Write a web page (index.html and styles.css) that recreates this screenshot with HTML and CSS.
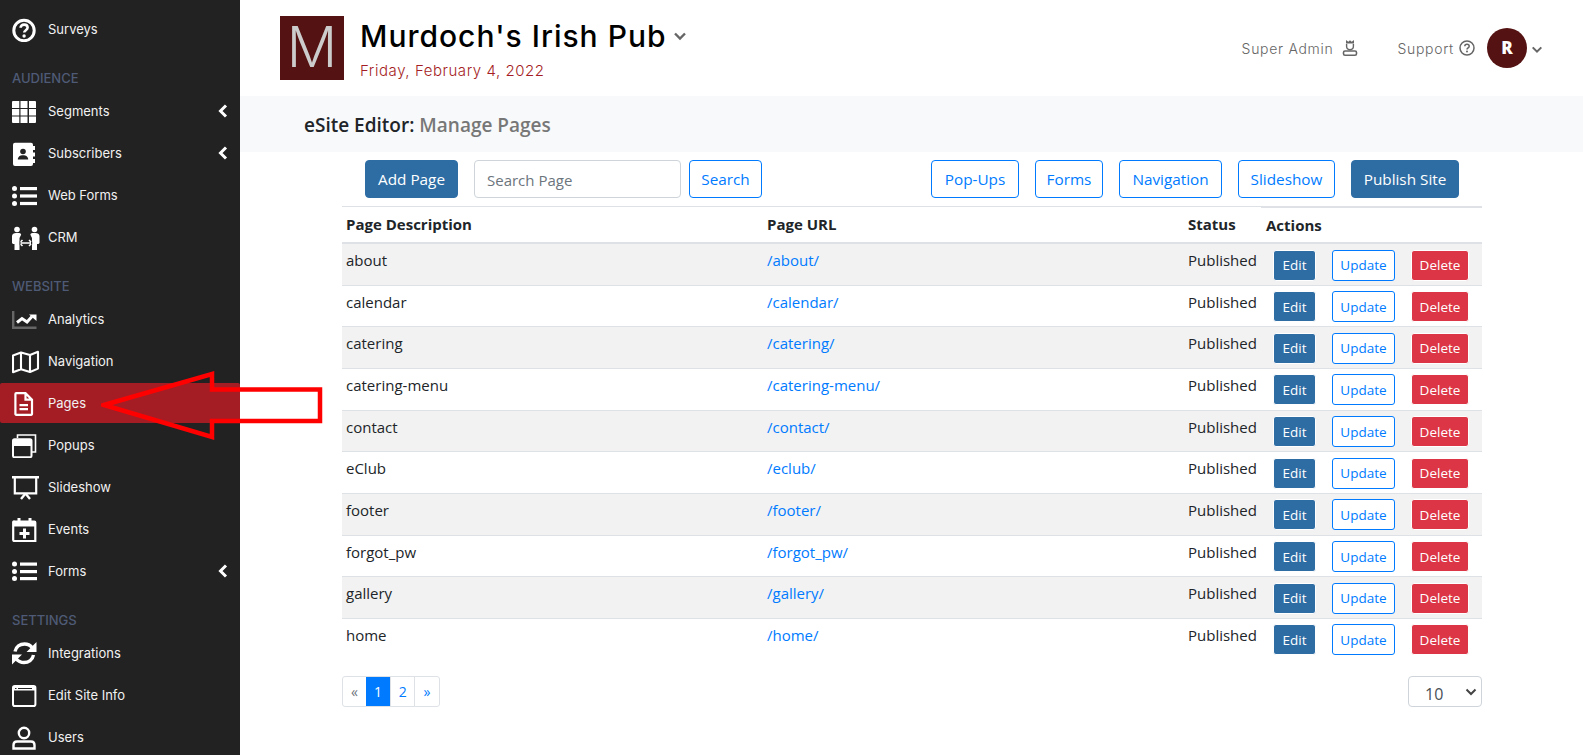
FILE: index.html
```html
<!DOCTYPE html>
<html lang="en">
<head>
<meta charset="utf-8">
<title>Manage Pages</title>
<link rel="stylesheet" href="styles.css">
</head>
<body>
<div class="app">
  <aside class="sidebar">
    <a class="nav-item first"><svg class="nav-icon" viewBox="0 0 28 26"><circle cx="12" cy="14.5" r="10.2" fill="none" stroke="#fff" stroke-width="3"/><path d="M8.600 11.800c0-2 1.500-3.200 3.500-3.200s3.500 1.200 3.500 3c0 2.600-3.400 2.600-3.400 5" fill="none" stroke="#fff" stroke-width="2.600"/><circle cx="12.100" cy="20" r="1.700" fill="#fff"/></svg><span>Surveys</span></a>
    <div class="nav-label">AUDIENCE</div>
    <a class="nav-item"><svg class="nav-icon" viewBox="0 0 28 26"><path fill="#fff" d="M1 3h6.300v7H0V4a1 1 0 0 1 1-1zM8.500 3h7v7h-7zM17 3h6a1 1 0 0 1 1 1v6h-7zM0 10.900h7.300v6.600H0zM8.500 10.900h7v6.600h-7zM17 10.900h7v6.600h-7zM0 18.400h7.300V25H1a1 1 0 0 1-1-1zM8.500 18.400h7V25h-7zM17 18.400h7V24a1 1 0 0 1-1 1h-6z"/></svg><span>Segments</span><svg class="nav-chevron" viewBox="0 0 10 14"><path d="M8 1.500 2.500 7 8 12.500" fill="none" stroke="#fff" stroke-width="3"/></svg></a>
    <a class="nav-item"><svg class="nav-icon" viewBox="0 0 28 26"><path fill="#fff" d="M3 2.700h16a2 2 0 0 1 2 2v19.300a2 2 0 0 1-2 2H3a2 2 0 0 1-2-2V4.700a2 2 0 0 1 2-2z"/><path fill="#fff" d="M21 6h2v4h-2zM21 12.500h2v4h-2zM21 19h2v4h-2z"/><circle cx="11" cy="11.500" r="2.800" fill="#222"/><path fill="#222" d="M5.800 19.500c0-2.800 2.300-4.300 5.200-4.300s5.200 1.500 5.200 4.300z"/></svg><span>Subscribers</span><svg class="nav-chevron" viewBox="0 0 10 14"><path d="M8 1.500 2.500 7 8 12.500" fill="none" stroke="#fff" stroke-width="3"/></svg></a>
    <a class="nav-item"><svg class="nav-icon" viewBox="0 0 28 26"><g fill="#fff"><circle cx="2.500" cy="6.500" r="2.500"/><circle cx="2.500" cy="14" r="2.500"/><circle cx="2.500" cy="21.500" r="2.500"/><rect x="8" y="5" width="17" height="3.200"/><rect x="8" y="12.400" width="17" height="3.200"/><rect x="8" y="19.900" width="17" height="3.200"/></g></svg><span>Web Forms</span></a>
    <a class="nav-item"><svg class="nav-icon" viewBox="0 0 28 26"><g fill="#fff"><circle cx="5" cy="5.500" r="2.800"/><circle cx="22.500" cy="5.500" r="2.800"/><path d="M0 12C0 10 2 9 4 9H7C8.500 9 9.500 10 9 11L7.500 14V26H2.500V20H1L0 19z"/><path d="M27.500 12C27.500 10 25.500 9 23.500 9H20.500C19 9 18 10 18.500 11L20 14V26H25V20H26.500L27.500 19z"/></g><path d="M7 19H20.500M10.500 16 7.500 19l3 3M17 16l3 3-3 3" fill="none" stroke="#fff" stroke-width="1.500"/><path d="M7.400 17.500h1.200v3H7.400zM19 17.500h1.200v3H19z" fill="#222"/></svg><span>CRM</span></a>
    <div class="nav-label">WEBSITE</div>
    <a class="nav-item"><svg class="nav-icon" viewBox="0 0 28 26"><path d="M1.200 5v16.800H24.500" fill="none" stroke="#666" stroke-width="2.400"/><path d="M5 16.500l5-4 5 3.500 5-5.500" fill="none" stroke="#fff" stroke-width="3"/><path fill="#fff" d="M17 8.500h7.500V15z"/></svg><span>Analytics</span></a>
    <a class="nav-item"><svg class="nav-icon" viewBox="0 0 28 26"><path d="M1 7.500 9 4.500l9 2.500 8-3.200v16.800L18 24l-9-2.800-8 3zM9 4.500v16.700M18 7v17" fill="none" stroke="#fff" stroke-width="2.100" stroke-linejoin="round"/></svg><span>Navigation</span></a>
    <a class="nav-item active"><svg class="nav-icon" viewBox="0 0 28 26"><path d="M4.200 3.200H13.500L20 9.700V24a.8.800 0 0 1-.8.800H4.200a.8.800 0 0 1-.8-.8V4a.8.800 0 0 1 .8-.8zM13.500 3.200v6.500H20" fill="none" stroke="#fff" stroke-width="2.200"/><path fill="#fff" d="M7.500 14h8.500v2.200H7.500zM7.500 18h8.500v2.200H7.500z"/></svg><span>Pages</span></a>
    <a class="nav-item"><svg class="nav-icon" viewBox="0 0 28 26"><path d="M5.500 6V3h18v17h-4.500" fill="none" stroke="#fff" stroke-width="1.600"/><rect x="1" y="7.200" width="18.500" height="18" rx="1.500" fill="none" stroke="#fff" stroke-width="2"/><rect x="1" y="7.200" width="18.500" height="6.800" fill="#fff"/></svg><span>Popups</span></a>
    <a class="nav-item"><svg class="nav-icon" viewBox="0 0 28 26"><path fill="#fff" d="M0 2h27v2.500H0z"/><path d="M2.800 3.500v15.800h21.400V3.500" fill="none" stroke="#fff" stroke-width="2.200"/><path d="M13.500 19.500l-4.500 5.500M13.500 19.500l4.500 5.500" fill="none" stroke="#fff" stroke-width="2.400"/></svg><span>Slideshow</span></a>
    <a class="nav-item"><svg class="nav-icon" viewBox="0 0 28 26"><path d="M2.800 5.500h19.500a1 1 0 0 1 1 1V25H2a1 1 0 0 1-.8-1V6.500a1 1 0 0 1 1.600-1z" fill="none" stroke="#fff" stroke-width="2.200"/><path fill="#fff" d="M1 5h23v5.500H1zM5.500 2h3v3h-3zM16.500 2h3v3h-3zM11 12.500h3v3.500h3.500v3H14v3.500h-3V19H7.500v-3H11z"/></svg><span>Events</span></a>
    <a class="nav-item"><svg class="nav-icon" viewBox="0 0 28 26"><g fill="#fff"><circle cx="2.500" cy="6" r="2.500"/><circle cx="2.500" cy="13.500" r="2.500"/><circle cx="2.500" cy="20.500" r="2.500"/><rect x="8" y="4.500" width="17" height="3.200"/><rect x="8" y="12" width="17" height="3.200"/><rect x="8" y="19" width="17" height="3.200"/></g></svg><span>Forms</span><svg class="nav-chevron" viewBox="0 0 10 14"><path d="M8 1.500 2.500 7 8 12.500" fill="none" stroke="#fff" stroke-width="3"/></svg></a>
    <div class="nav-label">SETTINGS</div>
    <a class="nav-item"><svg class="nav-icon" viewBox="0 0 28 26"><path d="M3 11.500C4 6.500 8 4 12.500 4c3.500 0 6 1.500 7.800 3.800M21.500 15c-1 5-5 7.500-9.500 7.500-3.500 0-6-1.500-7.800-3.800" fill="none" stroke="#fff" stroke-width="3.400"/><path fill="#fff" d="M24.500 2v10h-10zM0 24.500v-10h10z"/></svg><span>Integrations</span></a>
    <a class="nav-item"><svg class="nav-icon" viewBox="0 0 28 26"><rect x="1" y="4" width="22.400" height="20" rx="1.800" fill="none" stroke="#fff" stroke-width="2"/><path fill="#fff" d="M1 4h22.400v4.500H1z"/><path fill="#222" d="M3 6h1.500v1H3zM6 6h14v1H6z"/></svg><span>Edit Site Info</span></a>
    <a class="nav-item"><svg class="nav-icon" viewBox="0 0 28 26"><circle cx="12" cy="9" r="5.200" fill="none" stroke="#fff" stroke-width="2.400"/><path d="M5 17.500h14c2 0 3.500 1.500 3.500 3.500v3.500h-21V21c0-2 1.500-3.500 3.500-3.500z" fill="none" stroke="#fff" stroke-width="2.400"/></svg><span>Users</span></a>
  </aside>

  <main class="main">
    <header class="topbar">
      <div class="logo">M</div>
      <div class="site">
        <div class="site-name">Murdoch's Irish Pub<svg class="caret" viewBox="0 0 14 10"><path d="M2 2.500 7 7.500 12 2.500" fill="none" stroke="#666" stroke-width="2.400"/></svg></div>
        <div class="site-date">Friday, February 4, 2022</div>
      </div>
      <div class="top-right">
        <span class="top-link role">Super Admin<svg class="top-icon" viewBox="0 0 16 16"><path d="M4 0 6.300 1.700 8 .2l1.700 1.500L12 0v3.600H4z" fill="#666"/><path d="M4.600 4v2.300a3.400 3.400 0 0 0 6.800 0V4" fill="none" stroke="#666" stroke-width="1.400"/><rect x="1.500" y="11" width="13" height="4.200" rx="1.500" fill="none" stroke="#666" stroke-width="1.600"/></svg></span>
        <span class="top-link support">Support<svg class="top-icon" viewBox="0 0 16 16"><circle cx="8" cy="8" r="7" fill="none" stroke="#666" stroke-width="1.500"/><path d="M5.800 6.300C5.800 5 6.800 4.300 8 4.300s2.200.7 2.200 1.900c0 1.700-2.200 1.600-2.200 3.300" fill="none" stroke="#666" stroke-width="1.500"/><circle cx="8" cy="11.600" r="1" fill="#666"/></svg></span>
        <span class="avatar">R</span>
        <svg class="caret small" viewBox="0 0 14 10"><path d="M2 2.500 7 7.500 12 2.500" fill="none" stroke="#666" stroke-width="2.400"/></svg>
      </div>
    </header>
    <div class="band"><strong>eSite Editor:</strong> <span>Manage Pages</span></div>

    <div class="content">
      <div class="toolbar">
        <div class="tool-group">
          <button class="btn solid w-add">Add Page</button>
          <input class="search" type="text" placeholder="Search Page">
          <button class="btn outline w-search">Search</button>
        </div>
        <div class="tool-group wide">
          <button class="btn outline w-popups">Pop-Ups</button>
          <button class="btn outline w-forms">Forms</button>
          <button class="btn outline w-nav">Navigation</button>
          <button class="btn outline w-slide">Slideshow</button>
          <button class="btn solid w-publish">Publish Site</button>
        </div>
      </div>

      <table class="pages">
        <colgroup><col class="c1"><col class="c2"><col class="c3"><col class="c4"></colgroup>
        <thead>
          <tr><th>Page Description</th><th>Page URL</th><th>Status</th><th class="actions-head">Actions</th></tr>
        </thead>
        <tbody>
          <tr><td>about</td><td><a>/about/</a></td><td>Published</td><td class="actions"><div class="row-btns"><button class="mini solid">Edit</button><button class="mini outline">Update</button><button class="mini danger">Delete</button></div></td></tr>
          <tr><td>calendar</td><td><a>/calendar/</a></td><td>Published</td><td class="actions"><div class="row-btns"><button class="mini solid">Edit</button><button class="mini outline">Update</button><button class="mini danger">Delete</button></div></td></tr>
          <tr><td>catering</td><td><a>/catering/</a></td><td>Published</td><td class="actions"><div class="row-btns"><button class="mini solid">Edit</button><button class="mini outline">Update</button><button class="mini danger">Delete</button></div></td></tr>
          <tr><td>catering-menu</td><td><a>/catering-menu/</a></td><td>Published</td><td class="actions"><div class="row-btns"><button class="mini solid">Edit</button><button class="mini outline">Update</button><button class="mini danger">Delete</button></div></td></tr>
          <tr><td>contact</td><td><a>/contact/</a></td><td>Published</td><td class="actions"><div class="row-btns"><button class="mini solid">Edit</button><button class="mini outline">Update</button><button class="mini danger">Delete</button></div></td></tr>
          <tr><td>eClub</td><td><a>/eclub/</a></td><td>Published</td><td class="actions"><div class="row-btns"><button class="mini solid">Edit</button><button class="mini outline">Update</button><button class="mini danger">Delete</button></div></td></tr>
          <tr><td>footer</td><td><a>/footer/</a></td><td>Published</td><td class="actions"><div class="row-btns"><button class="mini solid">Edit</button><button class="mini outline">Update</button><button class="mini danger">Delete</button></div></td></tr>
          <tr><td>forgot_pw</td><td><a>/forgot_pw/</a></td><td>Published</td><td class="actions"><div class="row-btns"><button class="mini solid">Edit</button><button class="mini outline">Update</button><button class="mini danger">Delete</button></div></td></tr>
          <tr><td>gallery</td><td><a>/gallery/</a></td><td>Published</td><td class="actions"><div class="row-btns"><button class="mini solid">Edit</button><button class="mini outline">Update</button><button class="mini danger">Delete</button></div></td></tr>
          <tr><td>home</td><td><a>/home/</a></td><td>Published</td><td class="actions"><div class="row-btns"><button class="mini solid">Edit</button><button class="mini outline">Update</button><button class="mini danger">Delete</button></div></td></tr>
        </tbody>
      </table>

      <div class="table-foot">
        <nav class="pager"><a class="muted">«</a><a class="current">1</a><a>2</a><a>»</a></nav>
        <div class="page-size"><span>10</span><svg viewBox="0 0 12 8"><path d="M1.500 1.500 6 6l4.500-4.500" fill="none" stroke="#444" stroke-width="2"/></svg></div>
      </div>
    </div>
  </main>

  <svg class="callout" viewBox="0 0 224 70"><path d="M3 34 111 3V18.500H219V50H111V66z" fill="none" stroke="#f00" stroke-width="4.500"/></svg>
</div>
</body>
</html>
```
FILE: styles.css
```css
* { box-sizing: border-box; }
html, body { margin: 0; height: 100%; overflow: hidden; }
body { font-family: "Open Sans", "Noto Sans", sans-serif; font-size: 15px; color: #212529; background: #fff; }
.app { position: relative; display: flex; height: 755px; overflow: hidden; }

/* Sidebar */
.sidebar { display: flex; flex-direction: column; flex: 0 0 240px; background: #222; padding-top: 8px; overflow: hidden; font-family: Inter, "Noto Sans", sans-serif; font-size: 13px; }
.nav-item { display: flex; flex: none; align-items: center; height: 40px; margin: 1px 0; padding: 0 12px; color: #f1f1f1; border-radius: 2px; }
.nav-item.active { background: #a51d24; }
.nav-icon { flex: 0 0 28px; width: 28px; height: 26px; margin-right: 8px; }
.nav-chevron { width: 10px; height: 14px; margin-left: auto; }
.nav-label { flex: none; padding: 20px 12px 4px; height: 40px; line-height: 16px; font-size: 13px; font-weight: 500; color: #4f5b76; }

/* Header */
.main { flex: 1; min-width: 0; }
.topbar { display: flex; align-items: flex-start; height: 96px; padding: 16px 40px 0; }
.logo { width: 64px; height: 64px; background: #541212; color: #ccc; font-family: Inter, sans-serif; font-weight: 300; font-size: 56px; line-height: 63px; text-align: center; }
.site { margin-left: 16px; }
.site-name { display: flex; align-items: center; height: 40px; font-family: Inter, sans-serif; font-size: 30px; font-weight: 500; letter-spacing: 1px; color: #000; }
.caret { width: 14px; height: 10px; margin-left: 6px; }
.site-date { margin-top: 5px; font-family: Inter, sans-serif; font-size: 15px; font-weight: 300; letter-spacing: .55px; color: #a51d24; }
.top-right { display: flex; align-items: center; margin-left: auto; height: 40px; margin-top: 12px; font-family: Inter, sans-serif; font-size: 14px; font-weight: 300; letter-spacing: .7px; color: #666; }
.top-link { display: flex; align-items: center; }
.top-icon { width: 16px; height: 16px; }
.role .top-icon { margin-left: 9px; }
.role { margin-right: 39px; }
.support .top-icon { margin-left: 5px; }
.support { margin-right: 12px; }
.avatar { width: 40px; height: 40px; border-radius: 50%; background: #541212; color: #fff; text-align: center; line-height: 40px; font-weight: 800; font-size: 17px; font-family: "Open Sans", sans-serif; letter-spacing: 0; }
.caret.small { width: 12px; height: 9px; margin-left: 4px; margin-top: 3px; }

.band { height: 56px; padding-left: 64px; line-height: 58px; background: #f8f9fa; font-size: 19px; font-weight: 600; }
.band strong { font-weight: 600; }
.band span { color: #777; }

/* Content */
.content { width: 1140px; margin-left: 102px; }
.toolbar { display: flex; justify-content: space-between; padding: 8px 23px; }
.tool-group { display: flex; gap: 8px; }
.tool-group.wide { gap: 16px; }
.btn { height: 38px; padding: 0; border: 1px solid; border-radius: 4px; font: inherit; font-size: 15.300px; }
.solid { background: #2e6da4; border-color: #2e6da4; color: #fff; }
.outline { background: #fff; border-color: #007bff; color: #007bff; }
.danger { background: #dc3545; border-color: #dc3545; color: #fff; }
.w-add { width: 93px; margin-right: 8px; }
.search { width: 207px; height: 38px; padding: 2px 12px 0; border: 1px solid #ced4da; border-radius: 4px; font: inherit; color: #495057; }
.search::placeholder { color: #6c757d; opacity: 1; }
.w-search { width: 73px; }
.w-popups { width: 88px; }
.w-forms { width: 68px; }
.w-nav { width: 103px; }
.w-slide { width: 97px; }
.w-publish { width: 108px; }

/* Table */
.pages { width: 1140px; table-layout: fixed; border-collapse: separate; border-spacing: 0; }
.c1 { width: 421px; }
.c2 { width: 421px; }
.c3 { width: 77px; }
.c4 { width: 221px; }
.pages th { height: 38px; padding: 5px 4px 0; text-align: left; font-weight: 700; vertical-align: top; border-top: 1px solid #dee2e6; border-bottom: 2px solid #dee2e6; line-height: 24px; white-space: nowrap; }
.pages th.actions-head { padding: 5px 5px 0; border-top-width: 2px; }
.pages td { height: 41.670px; padding: 4px 4px 0; vertical-align: top; line-height: 24px; border-bottom: 1px solid #dee2e6; white-space: nowrap; }
.pages tbody tr:nth-child(odd) td { background: #f2f2f2; }
.pages tbody tr:last-child td { border-bottom: 0; }
.pages a { color: #007bff; }
.pages td.actions { padding: 5.500px 0 0 12px; }
.row-btns { display: flex; gap: 16px; }
.mini { height: 31px; padding: 0; border: 1px solid; border-radius: 3px; font-family: inherit; font-size: 13.500px; }
.mini:nth-child(1) { width: 43px; }
.mini:nth-child(2) { width: 63px; }
.mini:nth-child(3) { width: 58px; }

.table-foot { display: flex; justify-content: space-between; margin-top: 15px; }
.pager { display: flex; height: 31px; border: 1px solid #dee2e6; border-radius: 3px; font-size: 14px; line-height: 29px; color: #007bff; }
.pager a { width: 24.200px; text-align: center; border-left: 1px solid #dee2e6; }
.pager a:first-child { border-left: 0; width: 23px; }
.pager .muted { color: #6c757d; }
.pager .current { background: #007bff; color: #fff; border-left: 0; }
.page-size { position: relative; width: 74px; height: 31px; border: 1px solid #ced4da; border-radius: 4px; color: #495057; padding: 6px 0 0 16px; font-size: 16px; }
.page-size span { display: block; height: 18px; line-height: 23px; overflow: hidden; }
.page-size svg { position: absolute; right: 4px; top: 11px; width: 12px; height: 8px; }

/* Red arrow drawn on top of the screenshot */
.callout { position: absolute; left: 101px; top: 371px; width: 224px; height: 70px; }
```
